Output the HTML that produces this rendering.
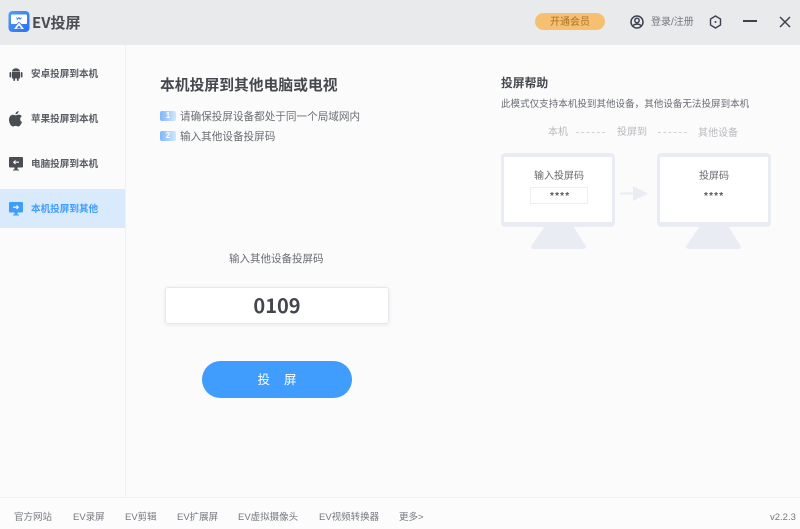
<!DOCTYPE html>
<html><head><meta charset="utf-8">
<style>
*{margin:0;padding:0;box-sizing:border-box}
html,body{width:800px;height:529px;overflow:hidden;background:#fbfbfc;font-family:"Liberation Sans","Noto Sans CJK SC",sans-serif;color:#55585e}
#w{position:absolute;left:0;top:0;width:800px;height:529px;overflow:hidden;filter:blur(.3px)}
.a{position:absolute;white-space:nowrap;line-height:1}
svg{position:absolute;display:block}
.f{top:513px;font-size:9.500px;color:#74777c}
.s{left:31px;font-size:9.600px;font-weight:700;color:#5a5d63}
</style></head><body><div id="w">
<div class="a" style="left:0;top:0;width:800px;height:45px;background:#e9eaec"></div>
<div class="a" style="left:125px;top:45px;width:1px;height:452px;background:#f1f1f3"></div>
<div class="a" style="left:0;top:497px;width:800px;height:32px;background:#fcfcfd;border-top:1px solid #f1f1f3"></div>

<svg style="left:8px;top:11px" width="22" height="22" viewBox="0 0 22 22"><defs><linearGradient id="g" x1="0" y1="0" x2="1" y2="1"><stop offset="0" stop-color="#4f9efb"/><stop offset="1" stop-color="#2a6ff5"/></linearGradient></defs><rect x="0.500" y="0" width="21" height="21" rx="4" fill="url(#g)"/><path d="M3 4.500a1 1 0 0 1 1-1h14a1 1 0 0 1 1 1V12a1 1 0 0 1-1 1h-4.500L11 10.500 8.500 13H4a1 1 0 0 1-1-1z" fill="#fff"/><path d="M6 18l5-6.500 5 6.500z" fill="#fff"/><path d="M8.500 17.500l2.500-3 2.500 3z" fill="#2f7cf6"/><path d="M8.500 6.500l1 1.800 1.500-1.800 1 1.800 1.500-1.800" stroke="#2f7cf6" stroke-width=".9" fill="none"/></svg>
<div class="a" style="left:32px;top:15px;font-family:'Noto Sans CJK SC',sans-serif;font-size:15px;font-weight:700;color:#4a4d53">EV投屏</div>

<div class="a" style="left:535px;top:13px;width:70px;height:17px;border-radius:9px;background:#f7c071;color:#a9702b;font-size:10px;line-height:19px;text-align:center">开通会员</div>
<svg style="left:630px;top:15px" width="14" height="14" viewBox="0 0 14 14" fill="none" stroke="#3c4350" stroke-width="1.500"><circle cx="7" cy="7" r="6"/><circle cx="7" cy="5.500" r="2.200"/><path d="M3 11c1-2.500 7-2.500 8 0"/></svg>
<div class="a" style="left:651px;top:18px;font-size:10px;color:#74777c">登录/注册</div>
<svg style="left:709px;top:15px" width="13" height="14" viewBox="0 0 13 14" fill="none" stroke="#3c4350" stroke-width="1.400"><path d="M6.500 1l5 3v6l-5 3-5-3V4z"/><circle cx="6.500" cy="7" r="1" fill="#3c4350" stroke="none"/></svg>
<div class="a" style="left:743px;top:20px;width:14px;height:2px;background:#3c4350"></div>
<svg style="left:779px;top:16px" width="12" height="12" viewBox="0 0 12 12" stroke="#3c4350" stroke-width="1.500"><path d="M1 1l10 10M11 1L1 11"/></svg>

<div class="a" style="left:0;top:189px;width:125px;height:39px;background:#d9eafd"></div>
<svg style="left:9px;top:68px" width="14" height="13" viewBox="0 0 14 13" fill="#4a4d53"><rect x="3" y="4" width="8" height="6.500"/><path d="M3 3.500a4 3.200 0 0 1 8 0z"/><rect x="0.500" y="4" width="1.800" height="5.500" rx=".9"/><rect x="11.700" y="4" width="1.800" height="5.500" rx=".9"/><rect x="4.300" y="10" width="1.800" height="3" rx=".9"/><rect x="7.900" y="10" width="1.800" height="3" rx=".9"/></svg>
<svg style="left:9px;top:111px" width="13" height="16" viewBox="0 0 13 16" fill="#4a4d53"><path d="M9.500 0c.2 1.800-1.400 3.400-3 3.300C6.300 1.700 8 .2 9.500 0zM6.500 4.400c1-.1 2-.8 3.300-.8 1.200 0 2.300.6 3 1.600-2.400 1.400-2 4.800.2 5.800-.7 2-2.200 4.500-3.700 4.500-1 0-1.600-.6-2.700-.6s-1.700.6-2.700.6C1.900 15.500 0 11.800 0 8.800 0 5.700 2 3.800 3.900 3.800c1 0 1.900.6 2.600.6z"/></svg>
<svg style="left:9px;top:157px" width="14" height="14" viewBox="0 0 14 14"><path d="M1 0h12a1 1 0 0 1 1 1v8.500a1 1 0 0 1-1 1H8.500V12.500H10V13.500H4V12.500H5.500V10.500H1a1 1 0 0 1-1-1V1a1 1 0 0 1 1-1z" fill="#4a4d53"/><path d="M10 5.200H5M6.500 3.500L4.700 5.200 6.500 7" stroke="#fff" stroke-width="1.100" fill="none"/></svg>
<svg style="left:9px;top:202px" width="14" height="14" viewBox="0 0 14 14"><path d="M1 0h12a1 1 0 0 1 1 1v8.500a1 1 0 0 1-1 1H8.500V12.500H10V13.500H4V12.500H5.500V10.500H1a1 1 0 0 1-1-1V1a1 1 0 0 1 1-1z" fill="#3f9dfd"/><path d="M4 5.200h5M7.500 3.500l1.800 1.700L7.500 7" stroke="#fff" stroke-width="1.100" fill="none"/></svg>
<div class="a s" style="top:70px">安卓投屏到本机</div>
<div class="a s" style="top:115px">苹果投屏到本机</div>
<div class="a s" style="top:160px">电脑投屏到本机</div>
<div class="a s" style="top:205px;color:#3f9dfd">本机投屏到其他</div>

<div class="a" style="left:160px;top:79px;font-size:14.800px;font-weight:700;color:#45484e">本机投屏到其他电脑或电视</div>
<div class="a" style="left:160px;top:111px;width:16px;height:10px;border-radius:2px;background:linear-gradient(90deg,#7db8fb,#d4e7fc);color:#fff;font-size:8px;line-height:10px;font-weight:700;text-align:center">1</div>
<div class="a" style="left:180px;top:112px;font-size:10.600px;color:#6a6d72">请确保投屏设备都处于同一个局域网内</div>
<div class="a" style="left:160px;top:131px;width:16px;height:10px;border-radius:2px;background:linear-gradient(90deg,#7db8fb,#d4e7fc);color:#fff;font-size:8px;line-height:10px;font-weight:700;text-align:center">2</div>
<div class="a" style="left:180px;top:132px;font-size:10.600px;color:#6a6d72">输入其他设备投屏码</div>

<div class="a" style="left:229px;top:254px;font-size:10.500px;color:#6a6d72">输入其他设备投屏码</div>
<div class="a" style="left:165px;top:287px;width:224px;height:37px;background:#fff;border:1px solid #e8e8ea;border-radius:3px;box-shadow:0 1px 4px rgba(0,0,0,.08)"></div>
<div class="a" style="left:165px;top:293px;width:224px;text-align:center;font-family:'Noto Sans CJK SC',sans-serif;font-size:20px;font-weight:700;line-height:24px;color:#43464c">0109</div>
<div class="a" style="left:202px;top:361px;width:150px;height:37px;border-radius:19px;background:#409dfe;color:#fff;font-size:12.500px;line-height:38px;text-align:center">投&nbsp;&nbsp;&nbsp;&nbsp;屏</div>

<div class="a" style="left:501px;top:78px;font-size:11.800px;font-weight:700;color:#45484e">投屏帮助</div>
<div class="a" style="left:501px;top:100px;font-size:9.550px;color:#6a6d72">此模式仅支持本机投到其他设备，其他设备无法投屏到本机</div>
<div class="a" style="left:548px;top:128px;font-size:10px;color:#b8b9bc">本机</div>
<div class="a" style="left:576px;top:132px;width:29px;border-top:1px dashed #d2d3d5"></div>
<div class="a" style="left:617px;top:128px;font-size:10px;color:#b8b9bc">投屏到</div>
<div class="a" style="left:658px;top:132px;width:29px;border-top:1px dashed #d2d3d5"></div>
<div class="a" style="left:698px;top:129px;font-size:10px;color:#b8b9bc">其他设备</div>

<svg style="left:500px;top:150px" width="280" height="102" viewBox="500 150 280 102" fill="#e9edf3">
<path d="M545 226h28l12.500 19.500c.8 1.400 0 3.500-2 3.500H533.500c-2 0-2.800-2.100-2-3.500z"/>
<path d="M700 226h28l12.500 19.500c.8 1.400 0 3.500-2 3.500H688.500c-2 0-2.800-2.100-2-3.500z"/>
<rect x="501" y="153" width="114" height="74" rx="4"/>
<rect x="504" y="157" width="108" height="65" rx="1" fill="#fff"/>
<rect x="657" y="153" width="114" height="74" rx="4"/>
<rect x="660" y="157" width="108" height="65" rx="1" fill="#fff"/>
<rect x="620" y="192.500" width="14" height="2"/><path d="M633 186l15 7.500-15 7.500z"/>
<rect x="530.500" y="187.500" width="57" height="16" fill="#fff" stroke="#eceef1"/>
</svg>
<div class="a" style="left:534px;top:172px;font-size:10px;color:#66696e">输入投屏码</div>
<div class="a" style="left:699px;top:172px;font-size:10px;color:#66696e">投屏码</div>
<div class="a" style="left:550px;top:192px;font-size:10px;font-weight:700;letter-spacing:1.200px;color:#55585e">****</div>
<div class="a" style="left:704px;top:192px;font-size:10px;font-weight:700;letter-spacing:1.200px;color:#55585e">****</div>

<div class="a f" style="left:14px">官方网站</div>
<div class="a f" style="left:73px">EV录屏</div>
<div class="a f" style="left:125px">EV剪辑</div>
<div class="a f" style="left:177px">EV扩展屏</div>
<div class="a f" style="left:238px">EV虚拟摄像头</div>
<div class="a f" style="left:319px">EV视频转换器</div>
<div class="a f" style="left:399px">更多&gt;</div>
<div class="a f" style="left:770px">v2.2.3</div>
</div></body></html>
